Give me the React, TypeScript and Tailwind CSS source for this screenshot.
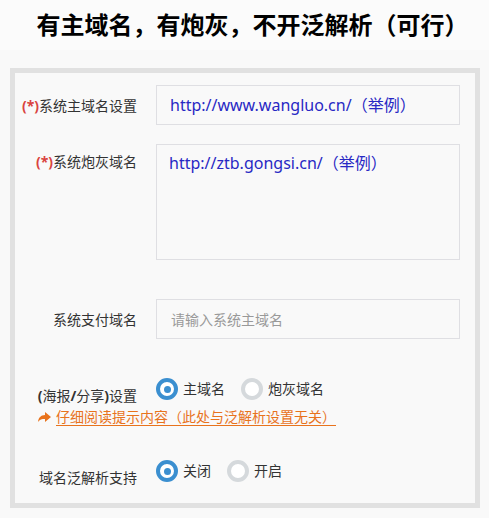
import React from "react";

const font = { fontFamily: '"Noto Sans", "Noto Sans CJK SC", sans-serif' };

function Radio({ checked, label }: { checked?: boolean; label: string }) {
    return (
        <label className="flex items-center gap-[5px] text-[14px] leading-[20px] text-[#333]">
            <span
                className={`flex h-[22px] w-[22px] items-center justify-center rounded-full border-[4px] bg-white ${checked ? "border-[#3b8fd0]" : "border-[#d5d9dc]"}`}
            >
                {checked && <span className="h-[7px] w-[7px] rounded-full bg-[#3b8fd0]" />}
            </span>
            {label}
        </label>
    );
}

export default function App() {
    return (
        <div className="min-h-[518px] w-[489px] bg-[#f9f9f9]" style={font}>
            {/* Title */}
            <div className="flex h-[50px] items-center justify-center bg-[#fbfbfb] pl-[16px]">
                <h1 className="text-[24px] font-bold leading-none text-black">
                    有主域名，有炮灰，不开泛解析（可行）
                </h1>
            </div>

            <div className="mx-[10px] mt-[18px] h-[440px] w-[470px] border-[5px] border-[#e1e1e1] bg-[#f9f9f9] pr-[15px]">
                {/* Main domain */}
                <div className="mt-[12px] flex items-center">
                    <div className="w-[122px] text-right text-[14px] text-[#333]">
                        <span className="font-bold text-[#d9443f]">(*)</span>系统主域名设置
                    </div>
                    <div className="ml-[19px] flex h-[40px] w-[304px] items-center border border-[#dfdfe3] pl-[13px] text-[16px] text-[#2828c4]">
                        http://www.wangluo.cn/（举例）
                    </div>
                </div>

                {/* Cannon fodder domains */}
                <div className="mt-[19px] flex items-start">
                    <div className="w-[122px] pt-[8px] text-right text-[14px] leading-[20px] text-[#333]">
                        <span className="font-bold text-[#d9443f]">(*)</span>系统炮灰域名
                    </div>
                    <div className="ml-[19px] h-[116px] w-[304px] border border-[#dfdfe3] pl-[12px] pt-[7px] text-[16px] leading-[22px] text-[#2828c4]">
                        http://ztb.gongsi.cn/（举例）
                    </div>
                </div>

                {/* Pay domain */}
                <div className="mt-[39px] flex items-center">
                    <div className="w-[122px] text-right text-[14px] text-[#333]">系统支付域名</div>
                    <div className="ml-[19px] flex h-[40px] w-[304px] items-center border border-[#dfdfe3] pl-[14px] text-[14px] text-[#999]">
                        请输入系统主域名
                    </div>
                </div>

                {/* Poster / share */}
                <div className="mt-[39px] flex items-start">
                    <div className="w-[122px] pt-[8px] text-right text-[14px] leading-[20px] text-[#333]">
                        <span className="font-bold">(</span>海报<span className="font-bold">/</span>分享<span className="font-bold">)</span>设置
                    </div>
                    <div className="ml-[19px] flex gap-[16px]">
                        <Radio checked label="主域名" />
                        <Radio label="炮灰域名" />
                    </div>
                </div>
                <div className="ml-[23px] mt-[1px] flex items-center gap-[5px] text-[14px] leading-[20px] text-[#e8731d]">
                    <svg width="13" height="11" viewBox="0 0 13 11" fill="#e8731d">
                        <path d="M7 0 L13 5 L7 10 L7 7 C4 7 1.5 7.5 0 10 C0.5 5.5 3 3.2 7 3 Z" />
                    </svg>
                    <span className="underline underline-offset-[3px]">仔细阅读提示内容（此处与泛解析设置无关）</span>
                </div>

                {/* Wildcard */}
                <div className="mt-[33px] flex items-start">
                    <div className="w-[122px] pt-[8px] text-right text-[14px] leading-[20px] text-[#333]">
                        域名泛解析支持
                    </div>
                    <div className="ml-[19px] flex gap-[16px]">
                        <Radio checked label="关闭" />
                        <Radio label="开启" />
                    </div>
                </div>
            </div>
        </div>
    );
}
